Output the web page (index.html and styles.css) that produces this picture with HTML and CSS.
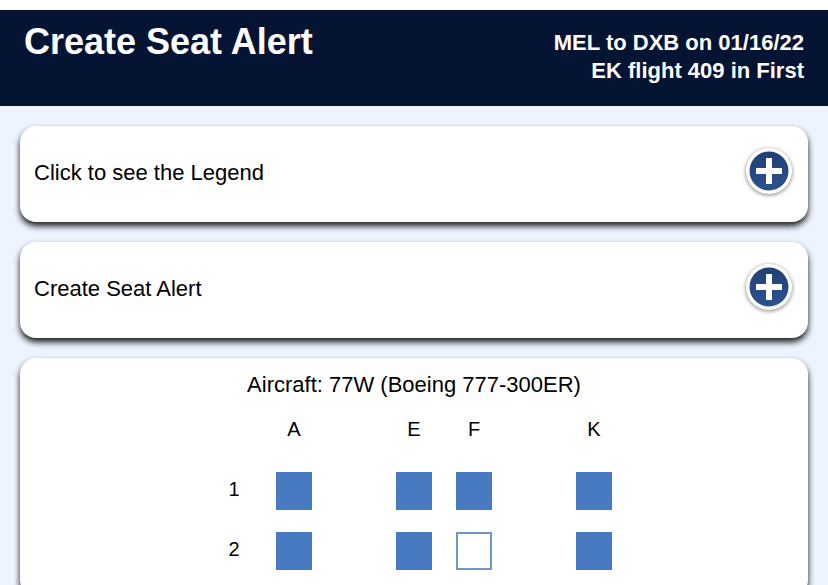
FILE: index.html
```html
<!DOCTYPE html>
<html lang="en">
<head>
  <meta charset="UTF-8">
  <meta name="viewport" content="width=device-width, initial-scale=1.0">
  <title>Create Seat Alert</title>
  <link rel="stylesheet" href="styles.css">
</head>
<body>
  <header class="header">
    <h1>Create Seat Alert</h1>
    <p class="flight">MEL to DXB on 01/16/22<br>EK flight 409 in First</p>
  </header>

  <main class="container">
    <button type="button" class="card toggle" aria-expanded="false">
      <span>Click to see the Legend</span>
      <svg class="plus" viewBox="0 0 54 54" aria-hidden="true">
        <defs>
          <linearGradient id="disc" x1="0" y1="0" x2="0" y2="1">
            <stop offset="0" stop-color="#223f73"/>
            <stop offset="1" stop-color="#2c5290"/>
          </linearGradient>
        </defs>
        <circle class="plus-ring" cx="27" cy="25" r="23"/>
        <circle fill="url(#disc)" cx="27" cy="25" r="19.5"/>
        <path class="plus-sign" d="M27 12v26M14 25h26"/>
      </svg>
    </button>

    <button type="button" class="card toggle" aria-expanded="false">
      <span>Create Seat Alert</span>
      <svg class="plus" viewBox="0 0 54 54" aria-hidden="true">
        <circle class="plus-ring" cx="27" cy="25" r="23"/>
        <circle fill="url(#disc)" cx="27" cy="25" r="19.5"/>
        <path class="plus-sign" d="M27 12v26M14 25h26"/>
      </svg>
    </button>

    <section class="card seatmap">
      <table>
        <caption>Aircraft: 77W (Boeing 777-300ER)</caption>
        <thead>
          <tr><td></td><th>A</th><td></td><th>E</th><th>F</th><td></td><th>K</th></tr>
        </thead>
        <tbody>
          <tr>
            <th>1</th>
            <td><button type="button" class="seat taken" aria-label="Seat 1A"></button></td>
            <td></td>
            <td><button type="button" class="seat taken" aria-label="Seat 1E"></button></td>
            <td><button type="button" class="seat taken" aria-label="Seat 1F"></button></td>
            <td></td>
            <td><button type="button" class="seat taken" aria-label="Seat 1K"></button></td>
          </tr>
          <tr>
            <th>2</th>
            <td><button type="button" class="seat taken" aria-label="Seat 2A"></button></td>
            <td></td>
            <td><button type="button" class="seat taken" aria-label="Seat 2E"></button></td>
            <td><button type="button" class="seat" aria-label="Seat 2F"></button></td>
            <td></td>
            <td><button type="button" class="seat taken" aria-label="Seat 2K"></button></td>
          </tr>
        </tbody>
      </table>
    </section>
  </main>
</body>
</html>
```

FILE: styles.css
```css
* {
  box-sizing: border-box;
}
body {
  font-family: "Liberation Sans", Arial, Helvetica, sans-serif;
  font-size: 22px;
  line-height: 28px;
  color: #000;
  background: #edf4ff;
  margin: 0;
}
.header {
  display: flex;
  justify-content: space-between;
  align-items: flex-start;
  background: #061434;
  color: white;
  border-top: 10px solid white;
  padding: 10px 24px 20px;
}
.header h1 {
  margin: 0;
  font-size: 36px;
  line-height: 44px;
}
.flight {
  margin: 0;
  padding: 9px 0 1px;
  font-weight: bold;
  text-align: right;
}
.container {
  display: flex;
  flex-direction: column;
  gap: 20px;
  padding: 20px;
}
.card {
  background: white;
  border-radius: 16px;
  box-shadow: 0 4px 6px rgba(0,0,0,0.9);
}
.toggle {
  display: flex;
  justify-content: space-between;
  align-items: center;
  width: 100%;
  border: none;
  padding: 20px 12px 22px 14px;
  font: inherit;
  color: inherit;
  text-align: left;
  cursor: pointer;
}
.plus {
  width: 54px;
  height: 54px;
}
.plus-ring {
  fill: white;
  filter: drop-shadow(0 1px 2px rgba(0,0,0,0.5));
}
.plus-sign {
  fill: none;
  stroke: white;
  stroke-width: 6;
}
.seatmap {
  padding: 13px 14px 17px;
}
table {
  margin: 0 auto;
  border-collapse: collapse;
  table-layout: fixed;
  width: 420px;
  font-size: 20px;
}
caption {
  font-size: 22px;
}
th, td {
  height: 60px;
  padding: 0;
  text-align: center;
  font-weight: normal;
}
.seat {
  display: block;
  width: 36px;
  height: 38px;
  margin: 4px auto 0;
  padding: 0;
  border: 2px solid #6e96cf;
  background: white;
  cursor: pointer;
}
.seat.taken {
  border: none;
  background: #477ac1;
}
```
